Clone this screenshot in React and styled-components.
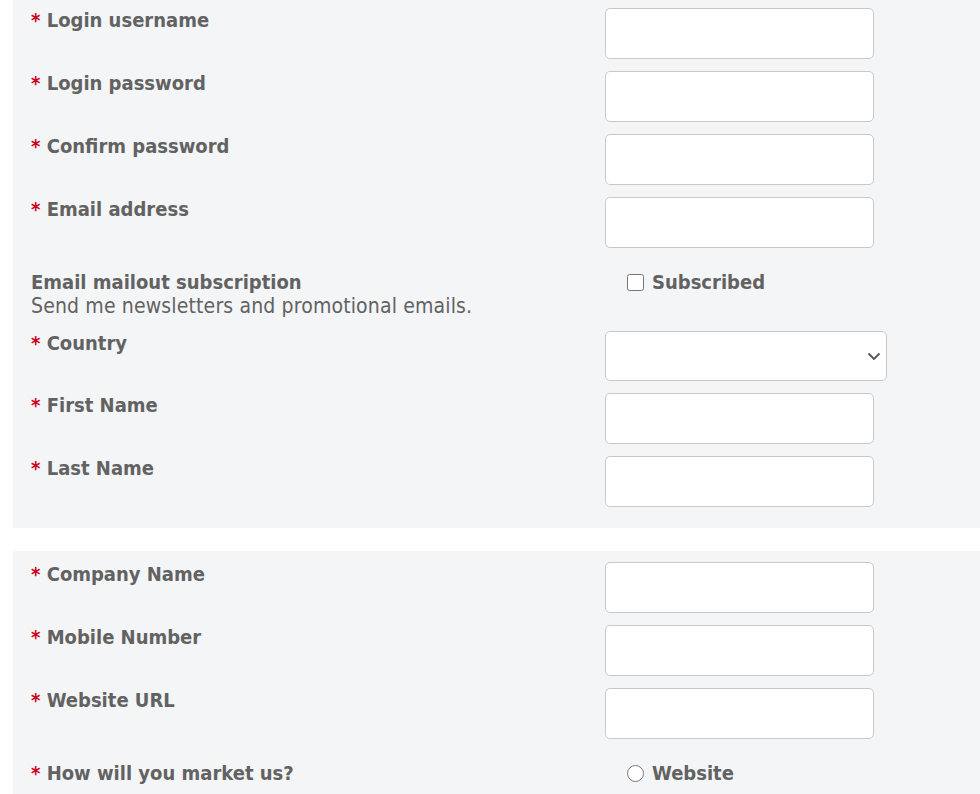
import React from "react";
import styled, { createGlobalStyle } from "styled-components";

const GlobalStyle = createGlobalStyle`
  body {
    margin: 0;
    background: #fff;
    font-family: "DejaVu Sans Condensed", "DejaVu Sans", sans-serif;
    font-stretch: condensed;
    color: #626262;
  }
`;

const accountFields = [
  { label: "Login username", type: "text" },
  { label: "Login password", type: "password" },
  { label: "Confirm password", type: "password" },
  { label: "Email address", type: "email" },
];

const nameFields = [
  { label: "First Name", type: "text" },
  { label: "Last Name", type: "text" },
];

const companyFields = [
  { label: "Company Name", type: "text" },
  { label: "Mobile Number", type: "tel" },
  { label: "Website URL", type: "url" },
];

const Field = ({ label, type }) => (
  <Row>
    <Label>
      <Req>*</Req> {label}
    </Label>
    <div>
      <Input type={type} />
    </div>
  </Row>
);

const App = () => {
  return (
    <>
      <GlobalStyle />
      <Page>
        <Panel $top={8}>
          {accountFields.map((f) => (
            <Field key={f.label} {...f} />
          ))}
          <Row $pad={10}>
            <div>
              <Label as="div">Email mailout subscription</Label>
              <Hint>Send me newsletters and promotional emails.</Hint>
            </div>
            <Choice>
              <input type="checkbox" />
              Subscribed
            </Choice>
          </Row>
          <Row>
            <Label>
              <Req>*</Req> Country
            </Label>
            <SelectWrap>
              <Select>
                <option></option>
              </Select>
              <Chevron width="14" height="9" viewBox="0 0 14 9">
                <path d="M1.5 1.5 L7 7 L12.5 1.5" fill="none" stroke="#555" strokeWidth="1.8" />
              </Chevron>
            </SelectWrap>
          </Row>
          {nameFields.map((f) => (
            <Field key={f.label} {...f} />
          ))}
        </Panel>
        <Panel $top={11}>
          {companyFields.map((f) => (
            <Field key={f.label} {...f} />
          ))}
          <Row $pad={10}>
            <Label>
              <Req>*</Req> How will you market us?
            </Label>
            <Choice>
              <input type="radio" name="market" />
              Website
            </Choice>
          </Row>
        </Panel>
      </Page>
    </>
  );
};

const Page = styled.div`
  width: 980px;
  height: 794px;
  overflow: hidden;
  padding-left: 13px;
  box-sizing: border-box;
  display: flex;
  flex-direction: column;
  gap: 23px;
`;

const Panel = styled.section`
  background: #f4f5f7;
  padding: ${(p) => p.$top}px 0 9px 18px;
`;

const Row = styled.div`
  display: grid;
  grid-template-columns: 574px 1fr;
  align-items: start;
  padding-top: ${(p) => p.$pad || 0}px;
  margin-bottom: 12px;
`;

const Label = styled.label`
  display: block;
  font-size: 20px;
  line-height: 24px;
  font-weight: bold;
  color: #626262;
`;

const Req = styled.span`
  color: #d0021b;
`;

const Hint = styled.div`
  font-size: 21px;
  line-height: 25px;
  letter-spacing: 0.15px;
  color: #626262;
`;

const Input = styled.input`
  display: block;
  width: 269px;
  height: 51px;
  box-sizing: border-box;
  border: 1px solid #c9c9c9;
  border-radius: 5px;
  background: #fff;
  font-size: 18px;
  padding: 0 10px;
`;

const SelectWrap = styled.div`
  position: relative;
  width: 282px;
`;

const Select = styled.select`
  display: block;
  width: 282px;
  height: 50px;
  box-sizing: border-box;
  border: 1px solid #c9c9c9;
  border-radius: 5px;
  background: #fff;
  font-size: 18px;
  padding: 0 10px;
  appearance: none;
`;

const Chevron = styled.svg`
  position: absolute;
  right: 6px;
  top: 21px;
  pointer-events: none;
`;

const Choice = styled.label`
  display: flex;
  align-items: center;
  gap: 8px;
  padding-left: 22px;
  font-size: 20px;
  line-height: 24px;
  font-weight: bold;
  color: #626262;

  input {
    width: 17px;
    height: 17px;
    margin: 0;
  }
`;

export default App;
